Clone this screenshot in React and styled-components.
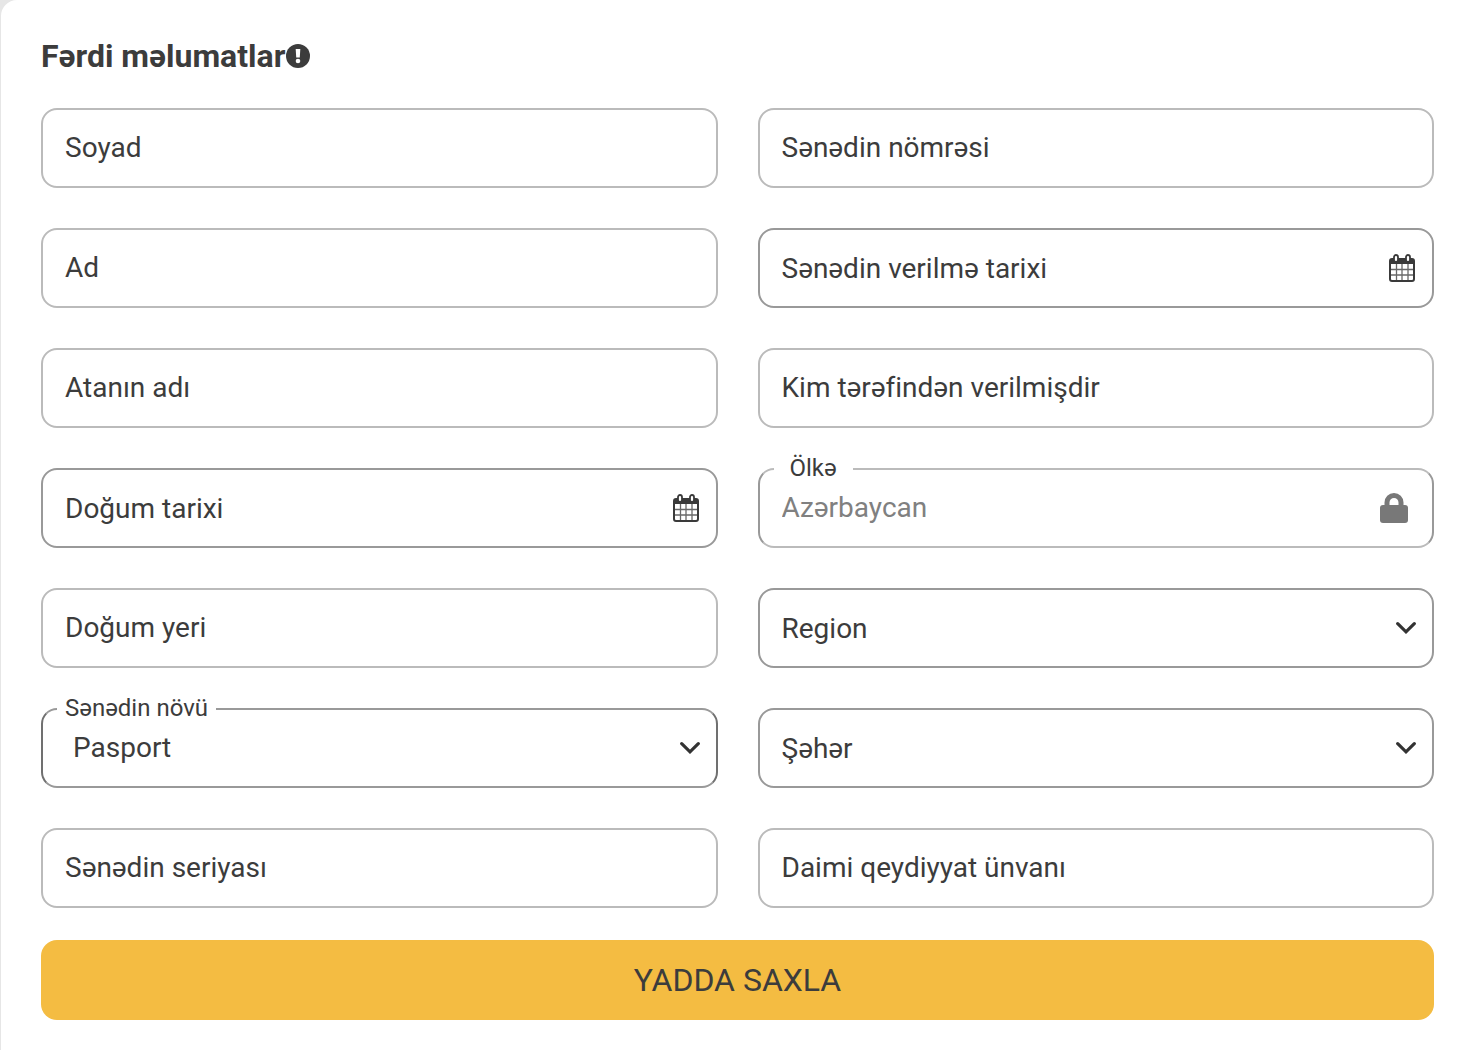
import React, { useState } from 'react'
import styled, { createGlobalStyle, css } from 'styled-components'

const documentFields = [
  { id: 'surname', label: 'Soyad', type: 'text' },
  { id: 'documentNumber', label: 'Sənədin nömrəsi', type: 'text' },
  { id: 'name', label: 'Ad', type: 'text' },
  { id: 'issueDate', label: 'Sənədin verilmə tarixi', type: 'date' },
  { id: 'fatherName', label: 'Atanın adı', type: 'text' },
  { id: 'issuedBy', label: 'Kim tərəfindən verilmişdir', type: 'text' },
  { id: 'birthDate', label: 'Doğum tarixi', type: 'date' },
  { id: 'country', label: 'Ölkə', type: 'locked' },
  { id: 'birthPlace', label: 'Doğum yeri', type: 'text' },
  { id: 'region', label: 'Region', type: 'select', options: ['Bakı', 'Abşeron', 'Gəncə'] },
  { id: 'documentType', label: 'Sənədin növü', type: 'select', options: ['Pasport', 'Şəxsiyyət vəsiqəsi'] },
  { id: 'city', label: 'Şəhər', type: 'select', options: ['Bakı', 'Sumqayıt', 'Gəncə'] },
  { id: 'documentSeries', label: 'Sənədin seriyası', type: 'text' },
  { id: 'address', label: 'Daimi qeydiyyat ünvanı', type: 'text' },
]

function CalendarIcon() {
  return (
    <svg width="28" height="30" viewBox="0 0 28 30" aria-hidden="true">
      <rect x="2" y="6" width="24" height="22" rx="2" fill="#fff" stroke="#3a3a3a" strokeWidth="2" />
      <path d="M2 6h24v5H2z" fill="#3a3a3a" />
      <path d="M8.500 11v16M14 11v16M20 11v16M3 16.500h22M3 22h22" stroke="#686868" strokeWidth="1.300" />
      <rect x="6" y="2" width="4" height="7" rx="2" fill="#fff" stroke="#3a3a3a" strokeWidth="1.800" />
      <rect x="18" y="2" width="4" height="7" rx="2" fill="#fff" stroke="#3a3a3a" strokeWidth="1.800" />
    </svg>
  )
}

function LockIcon() {
  return (
    <svg width="28" height="30" viewBox="0 0 28 30" aria-hidden="true">
      <rect x="0" y="12" width="28" height="18" rx="3" fill="#787878" />
      <path d="M7 14V9.500a7 7 0 0 1 14 0V14" fill="none" stroke="#787878" strokeWidth="5" />
    </svg>
  )
}

function ChevronIcon() {
  return (
    <svg width="20" height="12" viewBox="0 0 20 12" aria-hidden="true">
      <path d="M1.700 1.700 10 9.800l8.300-8.100" fill="none" stroke="#333" strokeWidth="3.200" strokeLinecap="round" />
    </svg>
  )
}

function InfoIcon() {
  return (
    <svg width="24" height="24" viewBox="0 0 24 24" aria-hidden="true">
      <circle cx="12" cy="12" r="12" fill="#3c3c3c" />
      <path d="M9.700 5h4.600l-.5 8.500h-3.600z" fill="#fff" />
      <circle cx="12" cy="17" r="2.300" fill="#fff" />
    </svg>
  )
}

function Field({ id, label, type, options, value, onChange }) {
  const filled = value !== ''
  const handleChange = (e) => onChange(id, e.target.value)

  return (
    <FieldStyled>
      {type === 'select' ? (
        <Select id={id} value={value} onChange={handleChange} $filled={filled}>
          <option value="" hidden></option>
          {options.map((option) => (
            <option key={option} value={option}>{option}</option>
          ))}
        </Select>
      ) : (
        <Input id={id} type="text" value={value} onChange={handleChange} disabled={type === 'locked'} $strong={type === 'date'} />
      )}
      {filled
        ? <FloatingLabel htmlFor={id} $wide={type === 'locked'}>{label}</FloatingLabel>
        : <Label htmlFor={id} $lowered={type !== 'text'}>{label}</Label>}
      {type === 'date' && <CalendarButton type="button" aria-label={label}><CalendarIcon /></CalendarButton>}
      {type === 'select' && <Adornment><ChevronIcon /></Adornment>}
      {type === 'locked' && <Adornment $inset><LockIcon /></Adornment>}
    </FieldStyled>
  )
}

function App() {
  const [values, setValues] = useState({ country: 'Azərbaycan', documentType: 'Pasport' })

  const handleChange = (id, value) => {
    setValues({ ...values, [id]: value })
  }

  return (
    <>
      <GlobalStyle />
      <Card>
        <Title>Fərdi məlumatlar<InfoIcon /></Title>
        <Form onSubmit={(e) => e.preventDefault()}>
          <Fields>
            {documentFields.map((field) => (
              <Field key={field.id} {...field} value={values[field.id] || ''} onChange={handleChange} />
            ))}
          </Fields>
          <SaveButton type="submit">YADDA SAXLA</SaveButton>
        </Form>
      </Card>
    </>
  )
}

const GlobalStyle = createGlobalStyle`
  *{
    box-sizing: border-box;
  }
  body{
    margin: 0;
    background: #e6e6e6;
    color: #3c3c3c;
    font-family: Roboto, "Liberation Sans", sans-serif;
    font-variant-ligatures: none;
  }
  button, input, select{
    font: inherit;
    color: inherit;
  }
`;

const Card = styled.main`
  min-height: 100vh;
  margin-left: 1px;
  padding: 36px 32px 30px 40px;
  background: #fff;
  border-radius: 16px 0 0 0;
`;

const Title = styled.h1`
  display: flex;
  align-items: center;
  gap: 1px;
  margin: 0 0 32px;
  font-size: 32px;
  line-height: 40px;
  font-weight: 700;
`;

const Form = styled.form`
  display: flex;
  flex-direction: column;
  gap: 32px;
`;

const Fields = styled.div`
  display: grid;
  grid-template-columns: 1fr 1fr;
  gap: 40px;
`;

/* control, label and icon share one grid cell */
const FieldStyled = styled.div`
  position: relative;
  display: grid;
  height: 80px;
  align-items: center;
  > *{
    grid-area: 1 / 1;
  }
`;

const controlStyles = css`
  width: 100%;
  height: 80px;
  margin: 0;
  border: 2px solid #bbb;
  border-radius: 16px;
  background: #fff;
  font-size: 28px;
  outline: none;
`;

const Input = styled.input`
  ${controlStyles}
  padding: 0 64px 2px 22px;
  border-color: ${({ $strong }) => ($strong ? '#999' : '#bbb')};
  &:disabled{
    border-color: #bbb #999;
    color: #808080;
  }
`;

const Select = styled.select`
  ${controlStyles}
  padding: 0 64px 2px 30px;
  border-color: ${({ $filled }) => ($filled ? '#999 #707070' : '#999')};
  appearance: none;
`;

const Label = styled.label`
  justify-self: start;
  padding-left: 24px;
  padding-top: ${({ $lowered }) => ($lowered ? '2px' : '0')};
  font-size: 28px;
  line-height: 32px;
  pointer-events: none;
`;

const FloatingLabel = styled.label`
  position: absolute;
  top: -15px;
  left: 16px;
  padding: 0 ${({ $wide }) => ($wide ? '16px' : '8px')};
  background: #fff;
  font-size: 24px;
  line-height: 30px;
`;

const Adornment = styled.span`
  display: flex;
  justify-self: end;
  margin-right: ${({ $inset }) => ($inset ? '26px' : '18px')};
  pointer-events: none;
`;

const CalendarButton = styled.button`
  display: flex;
  justify-self: end;
  margin-right: 18px;
  padding: 0;
  border: none;
  background: none;
  cursor: pointer;
`;

const SaveButton = styled.button`
  height: 80px;
  border: none;
  border-radius: 16px;
  background: #f4bc42;
  font-size: 32px;
  cursor: pointer;
`;

export default App
